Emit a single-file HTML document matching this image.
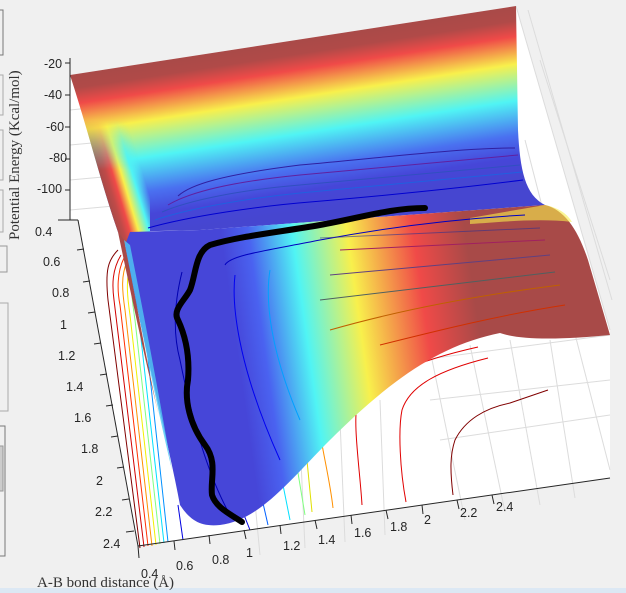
<!DOCTYPE html>
<html><head><meta charset="utf-8"><style>
html,body{margin:0;padding:0;background:#f0f0f0;width:626px;height:593px;overflow:hidden}
svg{display:block}
text{font-family:"Liberation Sans",sans-serif;font-size:12.5px;fill:#262626}
.s{font-family:"Liberation Serif",serif;font-size:15px;fill:#333}
</style></head><body>
<svg width="626" height="593" viewBox="0 0 626 593" xmlns="http://www.w3.org/2000/svg">
<defs>
<linearGradient id="up" gradientUnits="userSpaceOnUse" x1="300" y1="38" x2="326" y2="208">
<stop offset="0" stop-color="#a84a48"/><stop offset="0.09" stop-color="#b04a48"/><stop offset="0.18" stop-color="#f04a48"/>
<stop offset="0.34" stop-color="#f8f04c"/><stop offset="0.55" stop-color="#50f4f4"/>
<stop offset="0.75" stop-color="#4a70f0"/><stop offset="0.88" stop-color="#4646d8"/><stop offset="1" stop-color="#4646d0"/>
</linearGradient>
<linearGradient id="edge" gradientUnits="userSpaceOnUse" x1="100" y1="175" x2="140" y2="163">
<stop offset="0" stop-color="#a84a48"/><stop offset="0.15" stop-color="#c04a48"/><stop offset="0.3" stop-color="#f04a48"/>
<stop offset="0.5" stop-color="#f8f04c"/><stop offset="0.75" stop-color="#50f4f4"/><stop offset="1" stop-color="#50f4f4" stop-opacity="0"/>
</linearGradient>
<linearGradient id="edgefade" gradientUnits="userSpaceOnUse" x1="0" y1="120" x2="0" y2="170">
<stop offset="0" stop-color="#fff" stop-opacity="0"/><stop offset="1" stop-color="#fff" stop-opacity="1"/>
</linearGradient>
<mask id="m"><rect x="0" y="0" width="626" height="593" fill="url(#edgefade)"/></mask>
<linearGradient id="lo" gradientUnits="userSpaceOnUse" x1="230" y1="300" x2="500" y2="262">
<stop offset="0" stop-color="#4646d8"/><stop offset="0.1" stop-color="#4a62f0"/>
<stop offset="0.26" stop-color="#50f4f4"/><stop offset="0.46" stop-color="#f8f04c"/>
<stop offset="0.7" stop-color="#f04a48"/><stop offset="0.89" stop-color="#a84a48"/><stop offset="1" stop-color="#a84a48"/>
</linearGradient>
</defs>
<!-- left widgets -->
<rect x="-2" y="10" width="5" height="45" fill="none" stroke="#777"/>
<rect x="-2" y="75" width="5" height="40" fill="none" stroke="#aaa"/>
<rect x="-2" y="130" width="5" height="50" fill="none" stroke="#aaa"/>
<rect x="-2" y="190" width="5" height="42" fill="none" stroke="#aaa"/>
<rect x="-2" y="246" width="9" height="26" fill="none" stroke="#999"/>
<rect x="-2" y="303" width="10" height="108" fill="none" stroke="#aaa"/>
<rect x="-2" y="426" width="7" height="130" fill="none" stroke="#777"/>
<rect x="-2" y="446" width="5" height="45" fill="#ccc" stroke="#999"/>
<rect x="0" y="588" width="626" height="5" fill="#dce8f4"/>
<!-- white box -->
<polygon points="70,75 516,6 610,330 610,478 138,546 78,220 70,218" fill="#fff"/>
<g stroke="#dcdcdc" stroke-width="1" fill="none">
<line x1="70" y1="110" x2="120" y2="105"/><line x1="70" y1="145" x2="125" y2="140"/>
<line x1="70" y1="180" x2="125" y2="175"/><line x1="70" y1="210" x2="125" y2="205"/>
<line x1="516" y1="6" x2="610" y2="330"/><line x1="528" y1="10" x2="612" y2="300"/>
<line x1="540" y1="60" x2="610" y2="280"/><line x1="525" y1="140" x2="610" y2="470"/>
<line x1="430" y1="400" x2="610" y2="380"/><line x1="440" y1="440" x2="610" y2="415"/>
<line x1="420" y1="360" x2="610" y2="335"/>
<line x1="430" y1="350" x2="465" y2="520"/><line x1="470" y1="345" x2="505" y2="512"/>
<line x1="510" y1="340" x2="540" y2="505"/><line x1="550" y1="340" x2="575" y2="498"/>
<line x1="250" y1="450" x2="260" y2="555"/><line x1="300" y1="440" x2="305" y2="548"/>
<line x1="340" y1="420" x2="345" y2="542"/><line x1="380" y1="400" x2="385" y2="535"/>
</g>
<!-- floor contours -->
<g fill="none" stroke-width="1">
<path d="M118,250 C108,260 105,270 108,300 L140,548" stroke="#800000"/>
<path d="M121,255 C112,270 112,285 114,300 L144,547" stroke="#d00000"/>
<path d="M124,258 C117,272 117,290 120,305 L148,546" stroke="#ff3000"/>
<path d="M127,262 C121,275 122,290 125,310 L152,546" stroke="#ff9000"/>
<path d="M130,266 C126,280 127,295 130,315 L156,545" stroke="#f0f000"/>
<path d="M133,270 C130,285 132,300 135,320 L160,544" stroke="#80ff80"/>
<path d="M136,275 C134,290 136,305 140,330 L164,543" stroke="#00e0ff"/>
<path d="M140,285 C140,300 142,315 146,340 L168,542" stroke="#0090ff"/>
<path d="M178,505 L183,540" stroke="#0000e0"/>
<path d="M240,505 L250,530" stroke="#0000e0"/>
<path d="M260,490 L268,525" stroke="#0060ff"/>
<path d="M280,470 L290,520" stroke="#00e0ff"/>
<path d="M295,455 L305,515" stroke="#80ff80"/>
<path d="M305,440 L312,512" stroke="#e0e000"/>
<path d="M318,420 C322,450 330,480 333,508" stroke="#ff9000"/>
<path d="M362,505 C360,470 352,420 358,400 C370,380 420,360 478,347" stroke="#e00000"/>
<path d="M406,502 C400,470 398,430 402,410 C410,385 440,370 488,358" stroke="#e00000"/>
<path d="M453,495 C450,470 450,455 455,440 C465,420 485,408 510,403 L548,390" stroke="#800000"/>
</g>
<!-- upper sheet -->
<path d="M70,75 L516,6 L518,130 C520,170 525,195 545,205 L200,230 L118,232 C100,180 88,130 70,75 Z" fill="url(#up)"/>
<path d="M70,75 C88,130 100,180 118,232 L124,245 L150,245 L150,100 Z" fill="url(#edge)" mask="url(#m)"/>
<!-- lower sheet -->
<path d="M125,245 L130,232 L200,230 L545,205 C565,210 578,230 588,260 L610,335 C560,340 520,340 500,333 C440,345 390,380 330,440 C290,480 260,520 220,525 C200,527 190,520 180,505 C170,450 140,330 125,245 Z" fill="url(#lo)"/>
<path d="M470,218 L545,205 C560,208 568,215 572,222 C540,218 500,222 470,224 Z" fill="#f8f04c" opacity="0.6"/>
<path d="M118,232 L124,240 C140,320 150,380 160,420 C145,360 130,290 118,232 Z" fill="#a84a48"/>
<path d="M124,240 L130,245 C145,320 160,400 172,470 C155,400 138,310 124,240 Z" fill="#50c8f4" opacity="0.8"/>
<!-- surface contours -->
<g fill="none" stroke-width="1">
<path d="M178,196 C190,185 220,175 300,165 C380,158 460,148 515,148" stroke="#3020a0"/>
<path d="M168,205 C190,192 230,182 300,175 C380,167 460,160 518,155" stroke="#6020a0"/>
<path d="M162,212 C190,200 240,190 300,185 C380,178 460,170 520,165" stroke="#3050c0"/>
<path d="M155,220 C190,208 250,198 300,193 C380,186 460,178 522,172" stroke="#2060e0"/>
<path d="M148,228 C190,216 260,206 310,202 C380,196 460,188 523,180" stroke="#0000d0"/>
<path d="M225,265 C230,255 270,250 320,240 C400,225 470,218 525,215" stroke="#0000c0"/>
<path d="M182,272 C175,300 172,330 180,360 C190,410 205,470 230,515" stroke="#0000b0"/>
<path d="M235,275 C232,300 235,360 280,460" stroke="#0000f0"/>
<path d="M270,270 C265,300 270,350 300,420" stroke="#00a0ff"/>
<path d="M320,238 L540,228" stroke="#303090" opacity="0.6"/>
<path d="M340,250 L545,240" stroke="#a02060"/>
<path d="M330,275 L550,255" stroke="#604080"/>
<path d="M320,300 L555,272" stroke="#506060"/>
<path d="M330,330 C400,310 480,295 560,285" stroke="#c06000"/>
<path d="M380,345 C440,330 500,315 565,305" stroke="#d03000"/>
</g>
<!-- black path -->
<path d="M425,208 C390,208 360,218 320,225 C280,232 240,236 210,245 C195,252 196,275 190,290 C185,300 172,310 178,320 C185,335 190,355 188,380 C184,400 190,425 205,445 C218,462 210,480 212,495 C216,508 232,515 242,522" fill="none" stroke="#000" stroke-width="6" stroke-linecap="round" stroke-linejoin="round"/>
<!-- axes -->
<g stroke="#262626" stroke-width="1">
<line x1="70" y1="58" x2="70" y2="220"/>
<line x1="70" y1="63" x2="65" y2="63"/><line x1="70" y1="95" x2="65" y2="95"/>
<line x1="70" y1="127" x2="65" y2="127"/><line x1="70" y1="159" x2="65" y2="159"/>
<line x1="70" y1="190" x2="65" y2="190"/>
<line x1="58" y1="220" x2="78" y2="220"/>
<line x1="78" y1="220" x2="138" y2="546"/>
<line x1="138" y1="546" x2="610" y2="478"/>
<line x1="77" y1="250" x2="84" y2="249"/><line x1="83" y1="282" x2="90" y2="281"/>
<line x1="88" y1="313" x2="95" y2="312"/><line x1="94" y1="344" x2="101" y2="343"/>
<line x1="100" y1="375" x2="107" y2="374"/><line x1="106" y1="406" x2="113" y2="405"/>
<line x1="111" y1="437" x2="118" y2="436"/><line x1="117" y1="468" x2="124" y2="467"/>
<line x1="122" y1="500" x2="129" y2="499"/><line x1="126" y1="532" x2="134" y2="531"/>
<line x1="138" y1="546" x2="139" y2="558"/><line x1="174" y1="541" x2="175" y2="550"/>
<line x1="209" y1="535" x2="210" y2="544"/><line x1="244" y1="530" x2="246" y2="539"/>
<line x1="280" y1="525" x2="281" y2="534"/><line x1="315" y1="520" x2="317" y2="529"/>
<line x1="351" y1="515" x2="352" y2="524"/><line x1="386" y1="510" x2="388" y2="519"/>
<line x1="422" y1="505" x2="423" y2="514"/><line x1="457" y1="500" x2="459" y2="509"/>
<line x1="492" y1="495" x2="494" y2="504"/>
</g>
<text x="44" y="68">-20</text><text x="44" y="99">-40</text><text x="46" y="131">-60</text>
<text x="49" y="162">-80</text><text x="37" y="193">-100</text>
<text x="35" y="236">0.4</text><text x="43" y="266">0.6</text><text x="52" y="297">0.8</text>
<text x="60" y="329">1</text><text x="58" y="360">1.2</text><text x="66" y="391">1.4</text>
<text x="74" y="422">1.6</text><text x="81" y="453">1.8</text><text x="96" y="485">2</text>
<text x="95" y="516">2.2</text><text x="103" y="548">2.4</text>
<text x="141" y="578">0.4</text><text x="176" y="570">0.6</text><text x="212" y="564">0.8</text>
<text x="246" y="557">1</text><text x="283" y="550">1.2</text><text x="318" y="544">1.4</text>
<text x="354" y="537">1.6</text><text x="390" y="531">1.8</text><text x="424" y="524">2</text>
<text x="460" y="517">2.2</text><text x="496" y="511">2.4</text>
<text class="s" x="37" y="587">A-B bond distance (Å)</text>
<text class="s" transform="translate(19,240) rotate(-90)">Potential Energy (Kcal/mol)</text>
</svg>
</body></html>
